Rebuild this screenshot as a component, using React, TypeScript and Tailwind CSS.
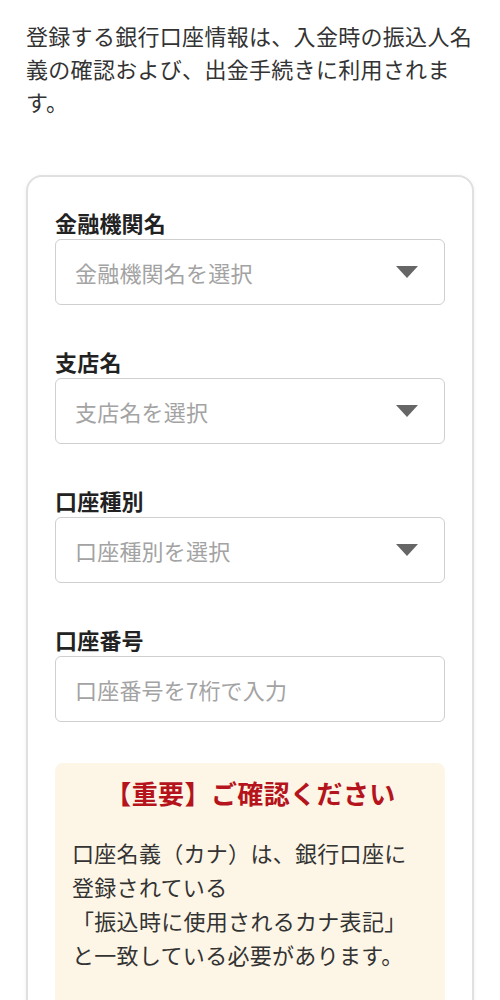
const font = { fontFamily: '"Noto Sans CJK JP", "Noto Sans", sans-serif' }

function SelectField({ label, placeholder }: { label: string; placeholder: string }) {
  return (
    <div className="flex flex-col gap-[1px]">
      <div className="text-[22px] leading-[32px] font-bold tracking-[0.2px] text-[#222]">{label}</div>
      <div className="flex h-[66px] items-center justify-between rounded-[6px] border-[1.5px] border-[#cfcfcf] bg-white pl-[19px] pr-[26px]">
        <span className="text-[22px] tracking-[0.2px] text-[#a3a3a3]">{placeholder}</span>
        <svg width="22" height="12" viewBox="0 0 22 12" aria-hidden="true">
          <path d="M0 0 H22 L11 12 Z" fill="#666" />
        </svg>
      </div>
    </div>
  )
}

function InputField({ label, placeholder }: { label: string; placeholder: string }) {
  return (
    <div className="flex flex-col gap-[1px]">
      <div className="text-[22px] leading-[32px] font-bold tracking-[0.2px] text-[#222]">{label}</div>
      <div className="flex h-[66px] items-center rounded-[6px] border-[1.5px] border-[#cfcfcf] bg-white pl-[19px]">
        <span className="text-[22px] tracking-[0.2px] text-[#a3a3a3]">{placeholder}</span>
      </div>
    </div>
  )
}

export default function App() {
  return (
    <div className="min-h-[1000px] w-[500px] overflow-hidden bg-white" style={font}>
      {/* Intro */}
      <p className="px-[26px] pt-[19px] text-[22px] leading-[33px] tracking-[0.3px] text-[#333]">
        登録する銀行口座情報は、入金時の振込人名義の確認および、出金手続きに利用されます。
      </p>

      {/* Card */}
      <div className="mx-[26px] mt-[57px] rounded-[16px] border-2 border-[#e0e0e0] bg-white px-[27px] pt-[29px] pb-10 shadow-[0_1px_4px_rgba(0,0,0,0.06)]">
        <div className="flex flex-col gap-[40px]">
          <SelectField label="金融機関名" placeholder="金融機関名を選択" />
          <SelectField label="支店名" placeholder="支店名を選択" />
          <SelectField label="口座種別" placeholder="口座種別を選択" />
          <InputField label="口座番号" placeholder="口座番号を7桁で入力" />
        </div>

        {/* Notice */}
        <div className="mt-[41px] rounded-[8px] bg-[#fdf6e6] pl-[17px] pr-4 pt-[12px] pb-16">
          <div className="text-center text-[26px] leading-[36px] font-bold tracking-[0.4px] text-[#b5141c]">
            【重要】ご確認ください
          </div>
          <p className="mt-[24px] text-[22px] leading-[34px] tracking-[0.3px] text-[#333]">
            口座名義（カナ）は、銀行口座に
            <br />
            登録されている
            <br />
            「振込時に使用されるカナ表記」
            <br />
            と一致している必要があります。
          </p>
        </div>
      </div>
    </div>
  )
}
